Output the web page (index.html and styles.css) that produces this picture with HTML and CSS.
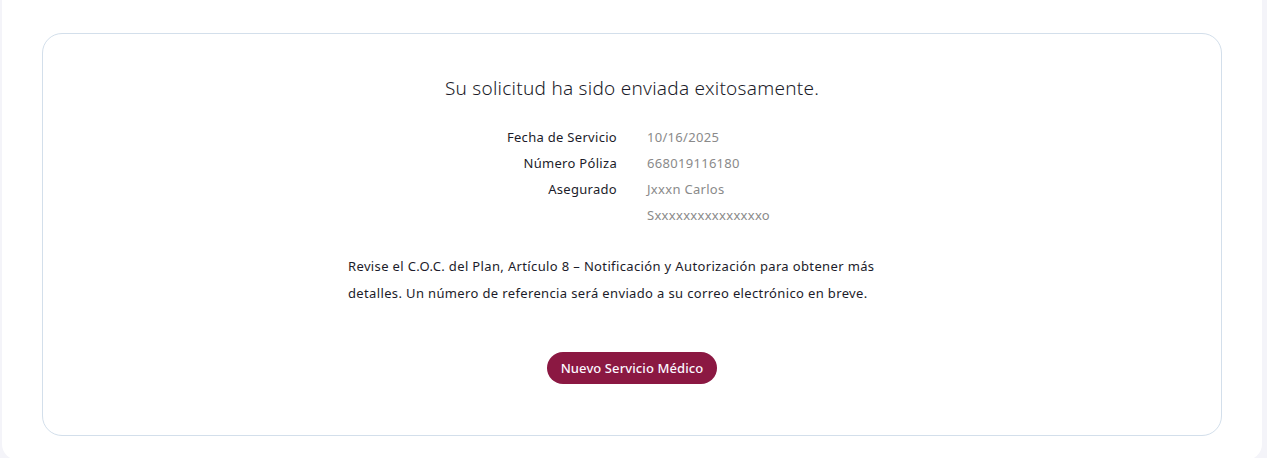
FILE: index.html
```html
<!DOCTYPE html>
<html lang="es">
<head>
<meta charset="utf-8">
<title>Solicitud enviada</title>
<link rel="stylesheet" href="styles.css">
</head>
<body>
<div class="page">
  <div class="panel">
    <section class="card">
      <h1 class="title">Su solicitud ha sido enviada exitosamente.</h1>
      <dl class="details">
        <dt>Fecha de Servicio</dt><dd>10/16/2025</dd>
        <dt>Número Póliza</dt><dd>668019116180</dd>
        <dt>Asegurado</dt><dd>Jxxxn Carlos<br>Sxxxxxxxxxxxxxxxo</dd>
      </dl>
      <p class="note">Revise el C.O.C. del Plan, Artículo 8 – Notificación y Autorización para obtener más detalles. Un número de referencia será enviado a su correo electrónico en breve.</p>
      <div class="actions"><button class="btn" type="button">Nuevo Servicio Médico</button></div>
    </section>
  </div>
</div>
</body>
</html>
```
FILE: styles.css
```css
html, body { margin: 0; padding: 0; }
body {
  background: #f4f4f9;
  font-family: "Noto Sans", "Open Sans", sans-serif;
  color: #1c1c2a;
  height: 458px;
  overflow: hidden;
}
.page { padding: 0 5px 0 2px; }
.panel {
  background: #ffffff;
  padding: 33px 40px 24px 40px;
  border-radius: 0 0 16px 16px;
}
.card {
  border: 1px solid #d3dfeb;
  border-radius: 20px;
  min-height: 403px;
  box-sizing: border-box;
  padding: 41px 20px 0;
  display: flex;
  flex-direction: column;
  align-items: center;
}
.title {
  margin: 0;
  font-size: 19px;
  font-weight: 300;
  letter-spacing: 0.25px;
  line-height: 26px;
  color: #1c1c2a;
}
.details {
  margin: 23px 0 0 0;
  display: grid;
  grid-template-columns: 270px 270px;
  column-gap: 30px;
  font-size: 13px;
  letter-spacing: 0.3px;
  line-height: 26px;
}
.details dt { text-align: right; color: #1c1c2a; }
.details dd { margin: 0; color: #8a8a8a; }
.note {
  margin: 25px 0 0 0;
  width: 568px;
  box-sizing: border-box;
  padding-right: 30px;
  font-size: 13px;
  letter-spacing: 0.36px;
  line-height: 27px;
  color: #1c1c2a;
}
.actions { margin-top: 45px; }
.btn {
  font-family: inherit;
  font-size: 13px;
  font-weight: 500;
  letter-spacing: 0.1px;
  color: #fbf7ff;
  background: #8b1842;
  border: 0;
  border-radius: 16px;
  height: 32px;
  width: 170px;
  padding: 0;
}
```
